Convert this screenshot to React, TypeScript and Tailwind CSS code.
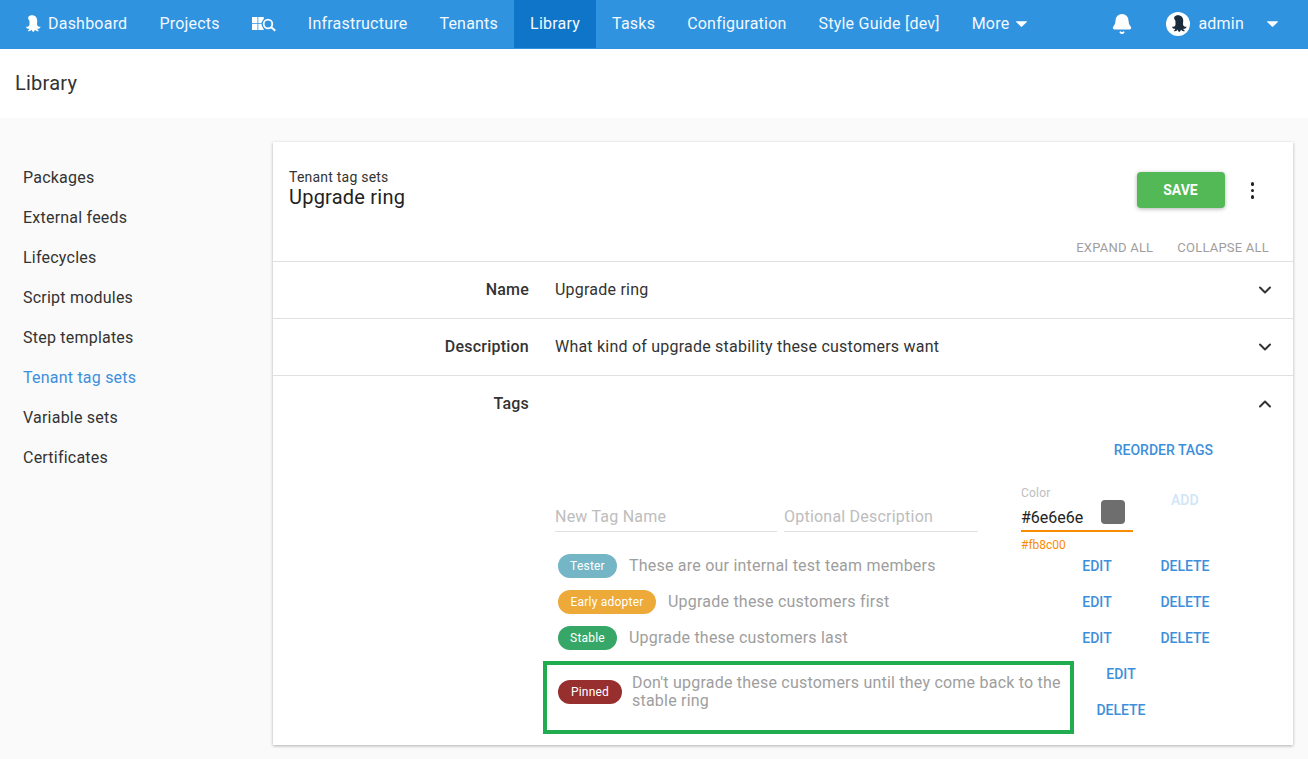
import { Bell, ChevronDown, ChevronUp } from 'lucide-react';

const sideLinks = ['Packages', 'External feeds', 'Lifecycles', 'Script modules', 'Step templates', 'Tenant tag sets', 'Variable sets', 'Certificates'];

function Octopus({ className }: { className?: string }) {
  return (
    <svg viewBox="0 0 18 18" className={className} fill="currentColor">
      <path d="M9 .3c3.400 0 5.200 2.500 5.200 5.400 0 2.400-.5 3.700.3 5.100.6 1 1.800 1.200 3 .7 0 1.500-1.500 2.600-3.200 2.300.2 1 .9 1.700 1.700 2.100-1.500.8-3.300.2-4-1.300-.2 1-.8 2-1.700 2.500-1-.5-1.500-1.500-1.700-2.500-.7 1.500-2.500 2.100-4 1.300.8-.4 1.500-1.100 1.700-2.100-1.700.3-3.200-.8-3.200-2.300 1.200.5 2.400.3 3-.7.8-1.400.3-2.700.3-5.100C3.800 2.800 5.600.3 9 .3z" />
    </svg>
  );
}

function Caret({ className }: { className?: string }) {
  return (
    <svg viewBox="0 0 11 6" className={className} fill="currentColor">
      <path d="M.5.300h10c.4 0 .6.400.3.700L5.900 5.700c-.2.200-.6.200-.8 0L.2 1C-.100.700.1.300.5.300z" />
    </svg>
  );
}

function NavLink({ label, active }: { label: string; active?: boolean }) {
  return (
    <div className={`flex h-full items-center px-4 ${active ? 'bg-[#0f75c8]' : ''}`}>{label}</div>
  );
}

function TagPill({ label, color, width }: { label: string; color: string; width: string }) {
  return (
    <span className={`flex h-6 shrink-0 items-center justify-center rounded-full text-xs text-white ${color} ${width}`}>
      {label}
    </span>
  );
}

function ActionLink({ label, className }: { label: string; className?: string }) {
  return <span className={`text-center text-sm font-medium tracking-normal text-[#3d8fdb] ${className ?? ''}`}>{label}</span>;
}

function TagRow({ label, color, width, text }: { label: string; color: string; width: string; text: string }) {
  return (
    <div className="flex h-9 items-center">
      <div className="flex w-[529px] items-center gap-3 pl-[14px]">
        <TagPill label={label} color={color} width={width} />
        <span className="text-[#9e9e9e]">{text}</span>
      </div>
      <ActionLink label="EDIT" className="w-[48px]" />
      <ActionLink label="DELETE" className="ml-[39px] w-[50px]" />
    </div>
  );
}

function SectionRow({ label, value }: { label: string; value: string }) {
  return (
    <div className="flex h-[57px] items-center border-t border-[#e0e0e0]">
      <span className="w-[256px] text-right font-medium text-[#333]">{label}</span>
      <span className="ml-[26px] flex-1 text-[#333]">{value}</span>
      <ChevronDown className="mr-[18px] h-5 w-5 text-[#333]" strokeWidth={2.4} />
    </div>
  );
}

export default function App() {
  return (
    <div className="min-h-[759px] bg-[#fafafa] font-['Roboto',sans-serif] text-base leading-6 tracking-[0.22px] text-[#333]">
      <nav className="flex h-[49px] items-center bg-[#2f93e0] pb-px text-[#f2f8fd]">
        <div className="flex h-full items-center gap-[7px] pl-[23px] pr-4">
          <Octopus className="h-[18px] w-[18px] text-white" />
          Dashboard
        </div>
        <NavLink label="Projects" />
        <div className="flex h-full items-center px-4">
          <svg viewBox="0 0 24 16" className="h-4 w-6 text-white">
            <path fill="currentColor" d="M0 1h5.500v6.200H0zM6.300 1h5.500v6.200H6.300zM0 8h5.500v6H0zM6.300 8h5.500v6H6.300z" />
            <circle cx="16" cy="8" r="6.500" fill="#2f93e0" />
            <circle cx="16" cy="8" r="4.300" fill="none" stroke="currentColor" strokeWidth="1.800" />
            <path d="M19 11l4.300 3.800" stroke="currentColor" strokeWidth="2" fill="none" />
          </svg>
        </div>
        <NavLink label="Infrastructure" />
        <NavLink label="Tenants" />
        <NavLink label="Library" active />
        <NavLink label="Tasks" />
        <NavLink label="Configuration" />
        <NavLink label="Style Guide [dev]" />
        <div className="flex h-full items-center gap-[7px] px-4">
          More
          <Caret className="h-[6px] w-[11px] text-white" />
        </div>
        <div className="ml-auto flex h-full items-center">
          <Bell className="mr-[33px] h-[22px] w-[22px] text-white" fill="currentColor" />
          <div className="flex h-6 w-6 items-center justify-center rounded-full bg-white">
            <Octopus className="h-[18px] w-[18px] text-[#1a2b3c]" />
          </div>
          <span className="ml-2">admin</span>
          <Caret className="ml-[23px] mr-[30px] h-[6px] w-[11px] text-white" />
        </div>
      </nav>

      <header className="flex h-[69px] items-center bg-white pb-0.5 pl-[15px] text-xl text-[#333]">Library</header>

      <div className="flex items-start pt-6 pr-[15px]">
        <aside className="flex w-[273px] shrink-0 flex-col pl-[23px] pt-4">
          {sideLinks.map((link) => (
            <div key={link} className={`flex h-10 items-center ${link === 'Tenant tag sets' ? 'text-[#3d8fdb]' : 'text-[#333]'}`}>
              {link}
            </div>
          ))}
        </aside>

        <main className="flex-1 bg-white shadow-[0_1px_3px_rgba(0,0,0,0.3)]">
          <div className="flex h-[93px] items-start pl-4 pr-[39px] pt-[26px]">
            <div className="flex-1">
              <div className="text-sm leading-[18px] text-[#333]">Tenant tag sets</div>
              <div className="-mt-px text-xl leading-6 text-[#222]">Upgrade ring</div>
            </div>
            <button className="mt-1 h-9 w-[88px] rounded-sm bg-[#52b956] text-sm font-bold tracking-normal text-white shadow-[0_1px_4px_rgba(0,0,0,0.3)]">
              SAVE
            </button>
            <div className="ml-[26px] mt-[14px] flex flex-col gap-[3px]">
              <span className="h-[3.5px] w-[3.5px] rounded-full bg-[#222]" />
              <span className="h-[3.5px] w-[3.5px] rounded-full bg-[#222]" />
              <span className="h-[3.5px] w-[3.5px] rounded-full bg-[#222]" />
            </div>
          </div>
          <div className="flex h-[26px] items-start justify-end gap-6 pr-6 pt-px text-[13px] leading-6 text-[#9e9e9e]">
            <span>EXPAND ALL</span>
            <span>COLLAPSE ALL</span>
          </div>

          <SectionRow label="Name" value="Upgrade ring" />
          <SectionRow label="Description" value="What kind of upgrade stability these customers want" />

          <div className="border-t border-[#e0e0e0] pb-[11px]">
            <div className="flex h-[56px] items-center">
              <span className="w-[256px] text-right font-medium text-[#333]">Tags</span>
              <span className="flex-1" />
              <ChevronUp className="mr-[18px] h-5 w-5 text-[#333]" strokeWidth={2.4} />
            </div>

            <div className="ml-[271px] mr-[24px]">
              <div className="mr-[56px] text-right text-sm font-medium leading-9 tracking-normal text-[#3d8fdb]">REORDER TAGS</div>

              <div className="mt-[6px] flex h-[74px] items-start pl-[11px]">
                <div className="mt-[18px] flex h-10 w-[222px] items-center border-b border-[#e0e0e0] pt-[10px] text-[#bdbdbd]">New Tag Name</div>
                <div className="ml-[7px] mt-[18px] flex h-10 w-[194px] items-center border-b border-[#e0e0e0] pt-[10px] text-[#bdbdbd]">Optional Description</div>
                <div className="ml-[43px] w-[112px]">
                  <div className="mt-[11px] text-xs leading-4 text-[#bdbdbd]">Color</div>
                  <div className="flex h-[31px] items-start justify-between border-b-2 border-[#fb8c00] pr-2 tracking-normal text-[#222]">
                    <span className="pt-[5px]">#6e6e6e</span>
                    <span className="-mt-px h-6 w-6 rounded bg-[#6e6e6e]" />
                  </div>
                  <div className="pt-[5px] text-xs leading-4 tracking-normal text-[#fb8c00]">#fb8c00</div>
                </div>
                <span className="ml-[38px] mt-4 text-sm font-medium tracking-normal text-[#cfe5f8]">ADD</span>
              </div>

              <TagRow label="Tester" color="bg-[#74b6c6]" width="w-[59px]" text="These are our internal test team members" />
              <TagRow label="Early adopter" color="bg-[#eeaa39]" width="w-[98px]" text="Upgrade these customers first" />
              <TagRow label="Stable" color="bg-[#36a766]" width="w-[59px]" text="Upgrade these customers last" />

              <div className="flex h-[78px] items-start">
                <div className="-ml-px mt-[5px] flex h-[73px] w-[531px] items-start border-4 border-[#21ad4f] pl-[11px] pt-2">
                  <TagPill label="Pinned" color="bg-[#982f2f]" width="mt-[7px] w-[64px]" />
                  <span className="ml-[10px] pr-[3px] pt-px leading-[18px] text-[#9e9e9e]">
                    Don't upgrade these customers until they come back to the stable ring
                  </span>
                </div>
                <div className="ml-[21px] flex w-[52px] flex-col">
                  <ActionLink label="EDIT" className="flex h-9 items-center justify-center" />
                  <ActionLink label="DELETE" className="flex h-9 items-center justify-center" />
                </div>
              </div>
            </div>
          </div>
        </main>
      </div>
    </div>
  );
}
